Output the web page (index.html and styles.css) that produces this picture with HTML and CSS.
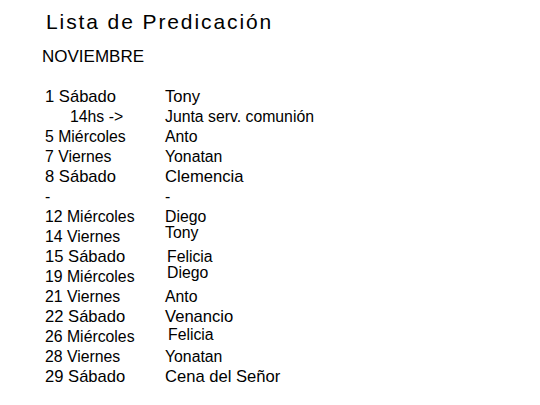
FILE: index.html
```html
<!DOCTYPE html>
<html lang="es">
<head>
<meta charset="utf-8">
<link rel="stylesheet" href="styles.css">
</head>
<body>
<div class="page">
  <h1 class="title">Lista de Predicación</h1>
  <div class="month">NOVIEMBRE</div>
  <div class="list">
    <div class="day sat">1 Sábado</div><div class="who sat">Tony</div>
    <div class="day indent">14hs -&gt;</div><div class="who">Junta serv. comunión</div>
    <div class="day">5 Miércoles</div><div class="who">Anto</div>
    <div class="day">7 Viernes</div><div class="who">Yonatan</div>
    <div class="day sat">8 Sábado</div><div class="who sat">Clemencia</div>
    <div class="day">-</div><div class="who">-</div>
    <div class="day">12 Miércoles</div><div class="who">Diego</div>
    <div class="day">14 Viernes</div><div class="who up">Tony</div>
    <div class="day sat">15 Sábado</div><div class="who right">Felicia</div>
    <div class="day">19 Miércoles</div><div class="who right up">Diego</div>
    <div class="day">21 Viernes</div><div class="who">Anto</div>
    <div class="day sat">22 Sábado</div><div class="who sat">Venancio</div>
    <div class="day">26 Miércoles</div><div class="who right2 up-s">Felicia</div>
    <div class="day">28 Viernes</div><div class="who">Yonatan</div>
    <div class="day sat">29 Sábado</div><div class="who sat">Cena del Señor</div>
  </div>
</div>
</body>
</html>
```

FILE: styles.css
```css
html, body {
  margin: 0;
  padding: 0;
  background: #ffffff;
}
body {
  font-family: "Liberation Sans", Arial, sans-serif;
  color: #000000;
}
.page {
  padding: 10px 0 0 0;
}
.title {
  margin: 0 0 0 46px;
  font-size: 21px;
  font-weight: normal;
  letter-spacing: 1.9px;
  line-height: 24px;
}
.month {
  margin: 13px 0 0 42px;
  font-size: 17px;
  line-height: 20px;
}
.list {
  margin: 20px 0 0 45px;
  display: grid;
  grid-template-columns: 120px auto;
  grid-auto-rows: 20px;
  font-size: 15.8px;
  line-height: 20px;
}
.sat {
  font-size: 16.6px;
}
.indent {
  padding-left: 25px;
}
.who.up {
  margin-top: -4px;
}
.who.up-s {
  margin-top: -2px;
}
.who.right {
  padding-left: 2px;
}
.who.right2 {
  padding-left: 3px;
}
```
